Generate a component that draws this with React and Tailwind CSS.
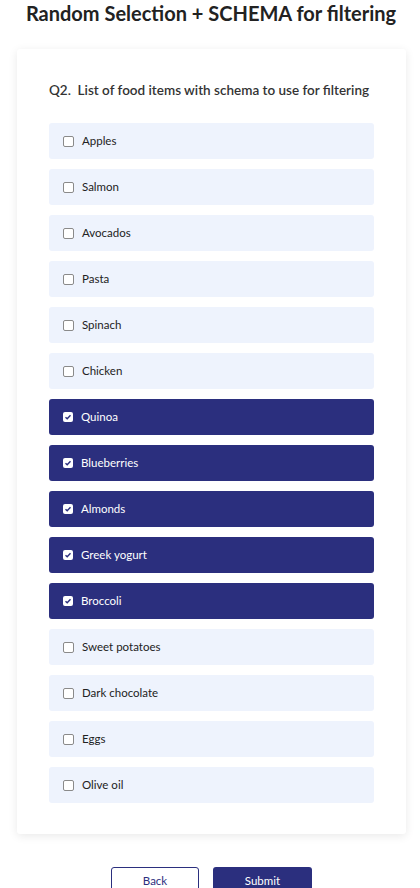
import React from "react";

const items = [
  ["Apples", false],
  ["Salmon", false],
  ["Avocados", false],
  ["Pasta", false],
  ["Spinach", false],
  ["Chicken", false],
  ["Quinoa", true],
  ["Blueberries", true],
  ["Almonds", true],
  ["Greek yogurt", true],
  ["Broccoli", true],
  ["Sweet potatoes", false],
  ["Dark chocolate", false],
  ["Eggs", false],
  ["Olive oil", false],
];

function Box({ checked }) {
  if (checked) {
    return (
      <span className="w-[10px] h-[10px] rounded-[2px] bg-white flex items-center justify-center shrink-0">
        <svg width="8" height="8" viewBox="0 0 8 8">
          <path d="M1.5 4.2 L3.2 5.8 L6.5 2.2" fill="none" stroke="#2b2f7e" strokeWidth="1.4" />
        </svg>
      </span>
    );
  }
  return <span className="w-[11px] h-[11px] rounded-[2px] border border-[#8a8a8a] bg-white shrink-0" />;
}

export default function App() {
  return (
    <div className="w-[420px] min-h-[888px] bg-white overflow-hidden" style={{ fontFamily: 'Lato, "Open Sans", sans-serif' }}>
      <h1 className="text-center text-[20px] font-bold text-[#222] leading-[26px] pl-[2px]">
        Random Selection + SCHEMA for filtering
      </h1>
      <div className="ml-[17px] w-[389px] mt-[23px] bg-white rounded-[3px] shadow-[0_2px_10px_rgba(0,0,0,0.09)] px-[32px] pt-[32px] pb-[31px]">
        <div className="text-[13.5px] font-semibold text-[#333] leading-[18px] mb-[24px] whitespace-nowrap">Q2.&nbsp; List of food items with schema to use for filtering</div>
        <div className="flex flex-col gap-[10px]">
          {items.map(([name, checked]) => (
            <div
              key={name}
              className={
                "h-[36px] rounded-[3px] flex items-center pl-[14px] gap-[8px] text-[11.5px] " +
                (checked ? "bg-[#2b2f7e] text-white" : "bg-[#eef3fd] text-[#222]")
              }
            >
              <Box checked={checked} />
              <span>{name}</span>
            </div>
          ))}
        </div>
      </div>
      <div className="flex justify-center gap-[14px] mt-[33px] pl-[3px]">
        <button className="w-[88px] h-[30px] rounded-[3px] border border-[#2b2f7e] bg-white text-[#2b2f7e] text-[11.5px] leading-[24px] pb-[2px]">Back</button>
        <button className="w-[99px] h-[30px] rounded-[3px] bg-[#2b2f7e] text-white text-[11.5px] leading-[24px] pb-[2px]">Submit</button>
      </div>
    </div>
  );
}
